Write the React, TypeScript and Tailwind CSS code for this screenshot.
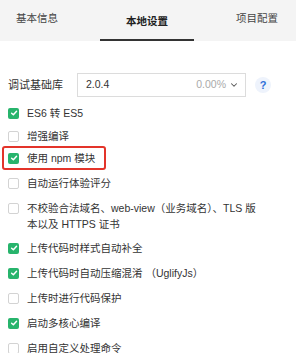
import { ChevronDown } from "lucide-react";

const font = { fontFamily: '"Liberation Sans", "Noto Sans CJK SC", sans-serif' };

type Item = { label: string; checked: boolean; mt: string; boxed?: boolean };

const items: Item[] = [
  { label: "ES6 转 ES5", checked: true, mt: "mt-0" },
  { label: "增强编译", checked: false, mt: "mt-[7px]" },
  { label: "使用 npm 模块", checked: true, mt: "mt-[6px]", boxed: true },
  { label: "自动运行体验评分", checked: false, mt: "mt-[9px]" },
  { label: "不校验合法域名、web-view（业务域名）、TLS 版本以及 HTTPS 证书", checked: false, mt: "mt-[9px]" },
  { label: "上传代码时样式自动补全", checked: true, mt: "mt-[8px]" },
  { label: "上传代码时自动压缩混淆 （UglifyJs）", checked: true, mt: "mt-[9px]" },
  { label: "上传时进行代码保护", checked: false, mt: "mt-[9px]" },
  { label: "启动多核心编译", checked: true, mt: "mt-[9px]" },
  { label: "启用自定义处理命令", checked: false, mt: "mt-[9px]" },
];

function Checkbox({ checked }: { checked: boolean }) {
  if (checked) {
    return (
      <span className="mt-[2.5px] flex h-[11px] w-[11px] shrink-0 items-center justify-center rounded-[2px] bg-[#27b46c]">
        <svg width="8" height="8" viewBox="0 0 10 10" fill="none">
          <path d="M2 5.2 4.2 7.3 8.2 2.8" stroke="white" strokeWidth="1.8" strokeLinecap="round" strokeLinejoin="round" />
        </svg>
      </span>
    );
  }
  return <span className="mt-[2.5px] h-[11px] w-[11px] shrink-0 rounded-[2px] border border-[#d3d3d3] bg-white" />;
}

export default function App() {
  return (
    <div className="h-[353px] w-[296px] overflow-hidden bg-white text-[#333]" style={font}>
      {/* tabs */}
      <div className="flex h-[41px] items-stretch justify-between bg-[#f4f4f4] pl-[16px] pr-[18px] text-[10.5px]">
        <div className="flex items-center pb-[4px] text-[#444]">基本信息</div>
        <div className="flex w-[94px] flex-col items-center justify-end">
          <span className="font-bold text-[#222]">本地设置</span>
          <span className="mt-[9px] h-[2px] w-full bg-[#333]" />
        </div>
        <div className="flex items-center pb-[4px] text-[#444]">项目配置</div>
      </div>

      {/* 调试基础库 */}
      <div className="mt-[32px] flex items-center pl-[8px] text-[11px]">
        <span className="w-[69px]">调试基础库</span>
        <div className="flex h-[24px] w-[169px] items-center border border-[#dcdcdc] bg-white pl-[8px] pr-[6px] text-[10.5px]">
          <span className="flex-1 text-[#333]">2.0.4</span>
          <span className="text-[#aaa]">0.00%</span>
          <ChevronDown className="ml-[3px] h-[10px] w-[10px] text-[#555]" strokeWidth={2.5} />
        </div>
        <span className="ml-[9px] flex h-[16px] w-[16px] items-center justify-center rounded-full bg-[#eef3fc] text-[11px] font-bold text-[#2f6fd8]">
          ?
        </span>
      </div>

      {/* options */}
      <div className="mt-[8px] flex flex-col pl-[8px] pr-[24px] text-[10.5px] leading-[16px]">
        {items.map((it) => (
          <div key={it.label} className={`relative flex items-start gap-[8px] ${it.mt}`}>
            <Checkbox checked={it.checked} />
            <span className="max-w-[236px] text-[#333]">{it.label}</span>
            {it.boxed && (
              <span className="pointer-events-none absolute -left-[6px] -top-[4px] h-[24px] w-[104px] rounded-[3px] border-2 border-[#e3342a]" />
            )}
          </div>
        ))}
      </div>
    </div>
  );
}
